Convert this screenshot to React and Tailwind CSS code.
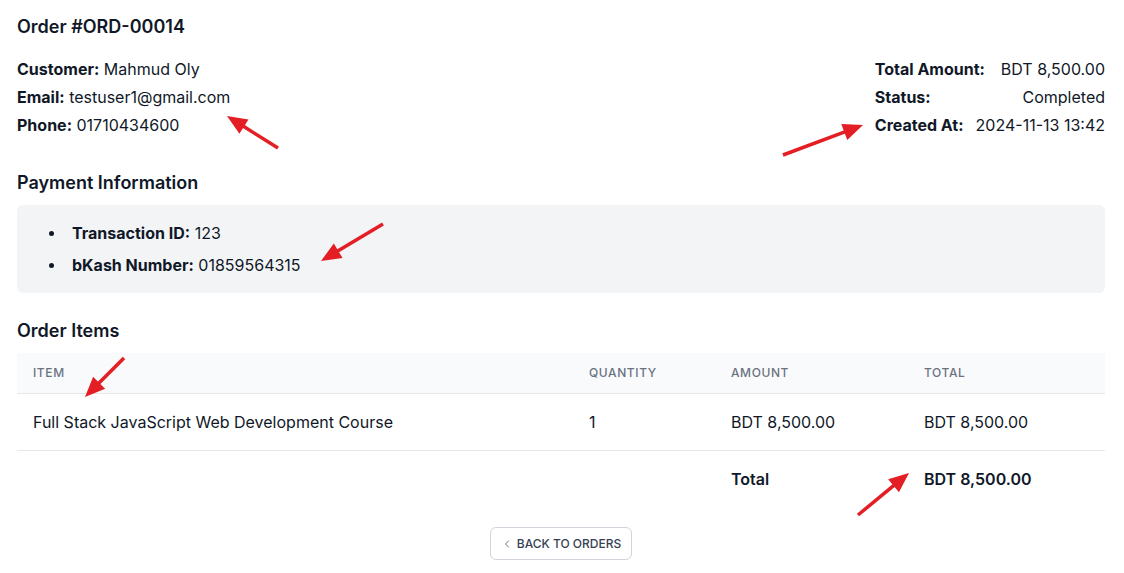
import React from "react";
import { ChevronLeft } from "lucide-react";

const arrows = [
  { tip: [227, 116], tail: [278, 148] },
  { tip: [863, 125], tail: [783, 155] },
  { tip: [321, 261], tail: [383, 224] },
  { tip: [85, 397], tail: [124, 358] },
  { tip: [909, 473], tail: [858, 515] },
];

function Arrow({ tip, tail }) {
  const dx = tip[0] - tail[0];
  const dy = tip[1] - tail[1];
  const len = Math.hypot(dx, dy);
  const ux = dx / len;
  const uy = dy / len;
  const hl = 20;
  const hw = 8.5;
  const bx = tip[0] - ux * hl;
  const by = tip[1] - uy * hl;
  const p1 = [bx - uy * hw, by + ux * hw];
  const p2 = [bx + uy * hw, by - ux * hw];
  return (
    <g>
      <line
        x1={tail[0]}
        y1={tail[1]}
        x2={bx + ux * 2}
        y2={by + uy * 2}
        stroke="#e31e24"
        strokeWidth="3.5"
      />
      <polygon
        points={`${tip[0]},${tip[1]} ${p1[0]},${p1[1]} ${p2[0]},${p2[1]}`}
        fill="#e31e24"
      />
    </g>
  );
}

function Bullet({ children }) {
  return (
    <li className="flex items-center">
      <span className="ml-[16px] mr-[18px] w-[5px] h-[5px] rounded-full bg-gray-900 shrink-0" />
      <span>{children}</span>
    </li>
  );
}

export default function App() {
  return (
    <div
      className="relative min-h-[573px] bg-white text-gray-900"
      style={{ fontFamily: "Inter, 'Noto Sans', sans-serif" }}
    >
      <div className="pl-[17px] pr-[19px] pt-[13px] pb-4">
        <h1 className="text-lg font-semibold leading-7 mb-4">Order #ORD-00014</h1>

        <div className="flex justify-between">
          <div className="flex flex-col gap-1 text-base leading-6">
            <div>
              <span className="font-bold">Customer:</span> Mahmud Oly
            </div>
            <div>
              <span className="font-bold">Email:</span> testuser1@gmail.com
            </div>
            <div>
              <span className="font-bold">Phone:</span> 01710434600
            </div>
          </div>
          <div className="flex flex-col gap-1 text-base leading-6">
            <div className="flex justify-between gap-3">
              <span className="font-bold">Total Amount:</span>
              <span>BDT 8,500.00</span>
            </div>
            <div className="flex justify-between gap-3">
              <span className="font-bold">Status:</span>
              <span>Completed</span>
            </div>
            <div className="flex justify-between gap-3">
              <span className="font-bold">Created At:</span>
              <span>2024-11-13 13:42</span>
            </div>
          </div>
        </div>

        <h2 className="text-lg font-semibold leading-7 mt-8 mb-2">Payment Information</h2>
        <div className="bg-gray-100 rounded-md p-4">
          <ul className="flex flex-col gap-2 text-base leading-6">
            <Bullet>
              <span className="font-bold">Transaction ID:</span> 123
            </Bullet>
            <Bullet>
              <span className="font-bold">bKash Number:</span> 01859564315
            </Bullet>
          </ul>
        </div>

        <h2 className="text-lg font-semibold leading-7 mt-6 mb-2">Order Items</h2>
        <table className="w-full table-fixed border-collapse">
          <colgroup>
            <col className="w-[556px]" />
            <col className="w-[142px]" />
            <col className="w-[193px]" />
            <col className="w-[197px]" />
          </colgroup>
          <thead className="bg-gray-50">
            <tr className="border-b border-gray-200">
              <th className="px-4 py-3 text-left text-xs leading-4 font-medium text-gray-500 uppercase tracking-wider">Item</th>
              <th className="px-4 py-3 text-left text-xs leading-4 font-medium text-gray-500 uppercase tracking-wider">Quantity</th>
              <th className="px-4 py-3 text-left text-xs leading-4 font-medium text-gray-500 uppercase tracking-wider">Amount</th>
              <th className="px-4 py-3 text-left text-xs leading-4 font-medium text-gray-500 uppercase tracking-wider">Total</th>
            </tr>
          </thead>
          <tbody>
            <tr className="border-b border-gray-200">
              <td className="px-4 py-4 text-base leading-6">Full Stack JavaScript Web Development Course</td>
              <td className="px-4 py-4 text-base leading-6">1</td>
              <td className="px-4 py-4 text-base leading-6">BDT 8,500.00</td>
              <td className="px-4 py-4 text-base leading-6">BDT 8,500.00</td>
            </tr>
            <tr>
              <td className="px-4 py-4"></td>
              <td className="px-4 py-4"></td>
              <td className="px-4 py-4 text-base leading-6 font-semibold">Total</td>
              <td className="px-4 py-4 text-base leading-6 font-semibold">BDT 8,500.00</td>
            </tr>
          </tbody>
        </table>

        <div className="flex justify-center mt-5">
          <button className="flex items-center gap-1 border border-gray-300 rounded-md px-2.5 h-[33px] text-xs font-medium uppercase text-gray-700 bg-white">
            <ChevronLeft size={12} className="text-gray-500" />
            <span>Back to Orders</span>
          </button>
        </div>
      </div>

      <svg
        className="absolute inset-0 pointer-events-none"
        width="1124"
        height="573"
        viewBox="0 0 1124 573"
      >
        {arrows.map((a, i) => (
          <Arrow key={i} tip={a.tip} tail={a.tail} />
        ))}
      </svg>
    </div>
  );
}
